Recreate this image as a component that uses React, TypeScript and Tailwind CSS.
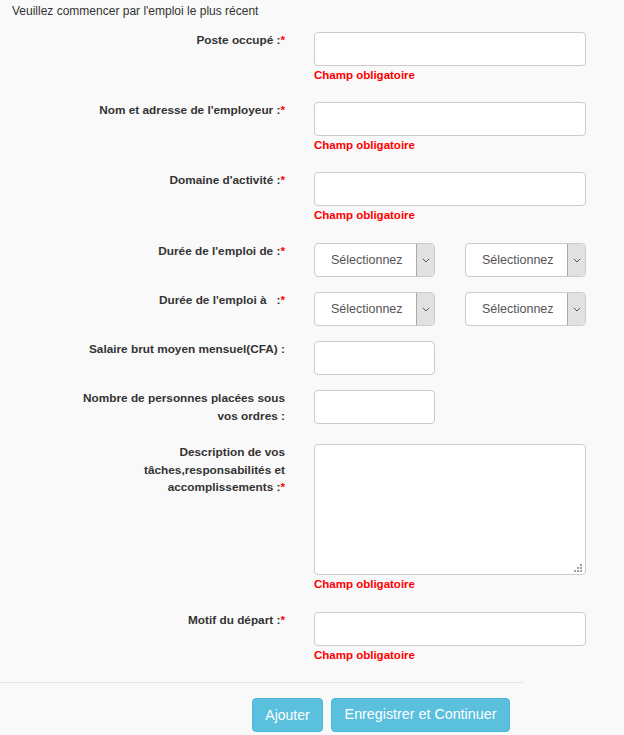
import React from "react";

const F = { fontFamily: '"Liberation Sans", Arial, sans-serif' };

function Label({ children, required }: { children: React.ReactNode; required?: boolean }) {
  return (
    <div className="w-[210px] ml-[75px] text-right text-[11.8px] leading-[17.5px] font-bold text-[#333] shrink-0">
      {children}
      {required && <span className="text-[#ff0000]">*</span>}
    </div>
  );
}

function Err() {
  return <div className="h-[16px] pt-[1px] text-[11.5px] leading-[16px] font-bold text-[#ff0000]">Champ obligatoire</div>;
}

function TextInput({ w }: { w: string }) {
  return <input type="text" className={`${w} h-[34px] block border border-[#ccc] rounded-[4px] bg-white outline-none`} />;
}

function Select() {
  return (
    <div className="w-[121px] h-[34px] border border-[#ccc] rounded-[4px] bg-white flex overflow-hidden">
      <div className="flex-1 flex items-center pl-[16px] text-[12.5px] text-[#555]">Sélectionnez</div>
      <div className="w-[18px] bg-[#e1e1e1] border-l border-[#a9a9a9] flex items-center justify-center">
        <svg width="8" height="5" viewBox="0 0 8 5">
          <path d="M0.8 0.8 L4 4 L7.2 0.8" fill="none" stroke="#555" strokeWidth="1" />
        </svg>
      </div>
    </div>
  );
}

export default function App() {
  return (
    <div className="min-h-screen bg-[#f9f9f9] text-[#333] pb-[3px]" style={F}>
      <div className="pl-[12px] pt-[3px] text-[12px] leading-[17px]">Veuillez commencer par l'emploi le plus récent</div>

      <div className="mt-[12px] flex flex-col">
        <div className="flex items-start mb-[20px]">
          <Label required>Poste occupé :</Label>
          <div className="ml-[29px]">
            <TextInput w="w-[272px]" />
            <Err />
          </div>
        </div>

        <div className="flex items-start mb-[20px]">
          <Label required>Nom et adresse de l'employeur :</Label>
          <div className="ml-[29px]">
            <TextInput w="w-[272px]" />
            <Err />
          </div>
        </div>

        <div className="flex items-start mb-[21px]">
          <Label required>Domaine d'activité :</Label>
          <div className="ml-[29px]">
            <TextInput w="w-[272px]" />
            <Err />
          </div>
        </div>

        <div className="flex items-start mb-[15px]">
          <Label required>Durée de l'emploi de :</Label>
          <div className="ml-[29px] flex gap-[30px]">
            <Select />
            <Select />
          </div>
        </div>

        <div className="flex items-start mb-[15px]">
          <Label required>Durée de l'emploi à&nbsp;&nbsp;&nbsp;:</Label>
          <div className="ml-[29px] flex gap-[30px]">
            <Select />
            <Select />
          </div>
        </div>

        <div className="flex items-start mb-[15px]">
          <Label>Salaire brut moyen mensuel(CFA) :</Label>
          <div className="ml-[29px]">
            <TextInput w="w-[121px]" />
          </div>
        </div>

        <div className="flex items-start mb-[19px]">
          <Label>Nombre de personnes placées sous vos ordres :</Label>
          <div className="ml-[29px]">
            <TextInput w="w-[121px]" />
          </div>
        </div>

        <div className="flex items-start mb-[21px]">
          <Label required>Description de vos tâches,responsabilités et accomplissements :</Label>
          <div className="ml-[29px]">
            <div className="relative w-[272px] h-[131px]">
              <textarea className="w-[272px] h-[131px] block border border-[#ccc] rounded-[4px] bg-white resize-none outline-none" />
              <svg className="absolute right-[4px] bottom-[3px]" width="8" height="8" viewBox="0 0 8 8">
                <rect x="6" y="0" width="2" height="2" fill="#a0a0a0" />
                <rect x="3" y="3" width="2" height="2" fill="#a0a0a0" />
                <rect x="6" y="3" width="2" height="2" fill="#a0a0a0" />
                <rect x="0" y="6" width="2" height="2" fill="#a0a0a0" />
                <rect x="3" y="6" width="2" height="2" fill="#a0a0a0" />
                <rect x="6" y="6" width="2" height="2" fill="#a0a0a0" />
              </svg>
            </div>
            <Err />
          </div>
        </div>

        <div className="flex items-start">
          <Label required>Motif du départ :</Label>
          <div className="ml-[29px]">
            <TextInput w="w-[272px]" />
            <Err />
          </div>
        </div>
      </div>

      <div className="mt-[20px] w-[523px] h-px bg-[#e3e3e3]" />

      <div className="mt-[15px] ml-[252px] flex gap-[8px]">
        <button className="w-[71px] h-[34px] bg-[#5bc0de] border border-[#46b8da] rounded-[4px] text-white text-[14px] text-center">Ajouter</button>
        <button className="w-[179px] h-[34px] bg-[#5bc0de] border border-[#46b8da] rounded-[4px] text-white text-[14.3px] text-center">Enregistrer et Continuer</button>
      </div>
    </div>
  );
}
